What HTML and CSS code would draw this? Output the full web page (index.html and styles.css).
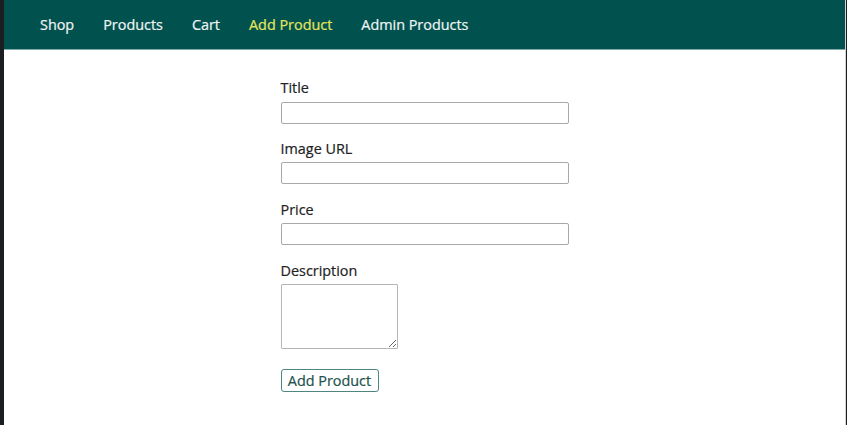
FILE: index.html
```html
<!DOCTYPE html>
<html lang="en">
<head>
<meta charset="utf-8">
<title>Add Product</title>
<link rel="stylesheet" href="styles.css">
</head>
<body>
<div class="frame">
  <header class="main-header">
    <nav class="main-nav">
      <a class="nav-link" href="#">Shop</a>
      <a class="nav-link" href="#">Products</a>
      <a class="nav-link" href="#">Cart</a>
      <a class="nav-link active" href="#">Add Product</a>
      <a class="nav-link" href="#">Admin Products</a>
    </nav>
  </header>
  <main class="content">
    <form class="product-form">
      <div class="form-control">
        <label class="field-label" for="title">Title</label>
        <input class="field-input" type="text" id="title">
      </div>
      <div class="form-control">
        <label class="field-label" for="imageUrl">Image URL</label>
        <input class="field-input" type="text" id="imageUrl">
      </div>
      <div class="form-control">
        <label class="field-label" for="price">Price</label>
        <input class="field-input" type="text" id="price">
      </div>
      <div class="form-control">
        <label class="field-label" for="description">Description</label>
        <textarea class="field-area" id="description"></textarea>
      </div>
      <button class="btn" type="submit">Add Product</button>
    </form>
  </main>
</div>
</body>
</html>
```

FILE: styles.css
```css
* { box-sizing: border-box; }

html, body {
  margin: 0;
  padding: 0;
  height: 100%;
  background: #1b1e21;
}

body {
  font-family: "Open Sans", "Noto Sans", sans-serif;
  font-size: 14.4px;
}

.frame {
  margin-left: 4px;
  width: 842px;
  height: 425px;
  background: #ffffff;
  border-right: 1px solid #d4d4d4;
  display: flex;
  flex-direction: column;
}

.main-header {
  height: 50px;
  background: #01524f;
  border-bottom: 1px solid #7fa9a6;
  display: flex;
  align-items: center;
  padding: 0 0 0 36px;
}

.main-nav {
  display: flex;
  gap: 29px;
}

.nav-link {
  color: #f2f5f4;
  text-decoration: none;
  font-size: 14.4px;
  -webkit-text-stroke: 0.2px currentColor;
}

.nav-link.active {
  color: #e6e65c;
}

.content {
  display: flex;
  justify-content: center;
  padding-top: 28px;
}

.product-form {
  width: 288px;
  display: flex;
  flex-direction: column;
  align-items: flex-start;
}

.form-control {
  width: 100%;
  margin-bottom: 15.3px;
}

.field-label {
  display: block;
  color: #222222;
  margin-bottom: 4px;
  line-height: 19.6px;
  -webkit-text-stroke: 0.2px currentColor;
}

.field-input {
  display: block;
  width: 100%;
  height: 22px;
  border: 1px solid #a8a8a8;
  border-radius: 2px;
  font: inherit;
  padding: 0 4px;
  background: #fff;
}

.field-area {
  display: block;
  width: 117px;
  height: 65px;
  border: 1px solid #b5b5b5;
  border-radius: 1px;
  font: inherit;
  background: #fff;
}

.btn {
  margin-top: 4px;
  height: 23px;
  width: 98px;
  padding: 0;
  font: inherit;
  font-size: 14.4px;
  color: #21504d;
  background: #ffffff;
  border: 1px solid #4f8580;
  border-radius: 3px;
  line-height: 19px;
  -webkit-text-stroke: 0.2px currentColor;
}
```
